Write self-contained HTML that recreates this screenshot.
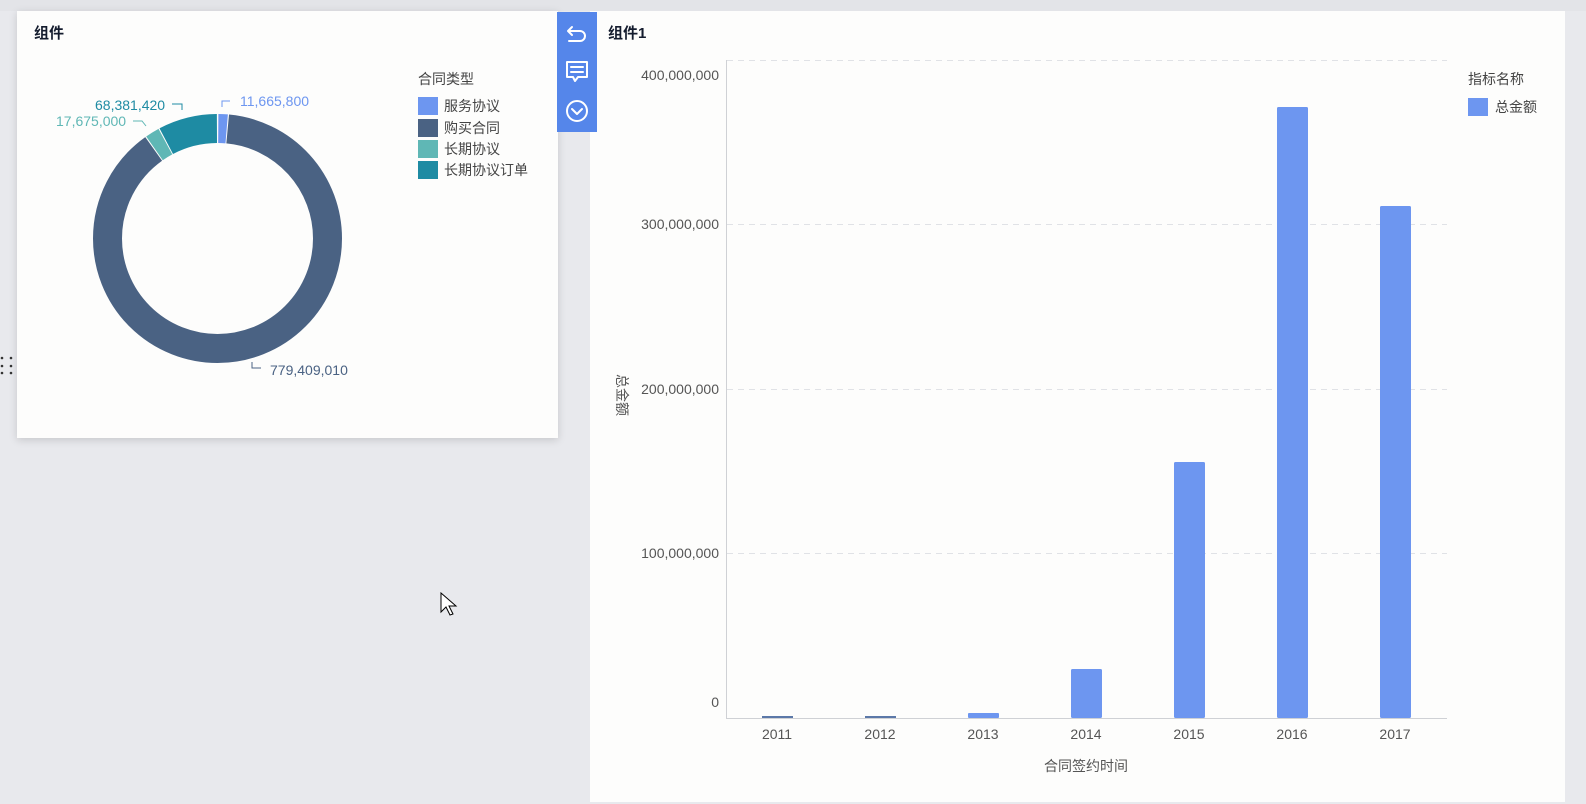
<!DOCTYPE html>
<html><head><meta charset="utf-8"><style>
body{margin:0;width:1586px;height:804px;background:#e8e9ed;position:relative;overflow:hidden;font-family:"Liberation Sans","Noto Sans CJK SC",sans-serif;color:#333}
.card{position:absolute;background:#fdfdfc}
.t{position:absolute;white-space:nowrap;font-size:14px;line-height:16px}
</style></head><body>
<div style="position:absolute;left:0;top:0;width:1586px;height:11px;background:#e3e4e8"></div>
<div class="card" style="left:17px;top:11px;width:541px;height:427px;box-shadow:0 2px 8px rgba(0,0,0,.15)"></div>
<div class="card" style="left:590px;top:11px;width:975px;height:791px"></div>
<div class="t" style="left:34px;top:26px;font-size:15px;font-weight:bold;color:#141c2e">组件</div>
<div class="t" style="left:608px;top:26px;font-size:15px;font-weight:bold;color:#141c2e">组件1</div>

<svg style="position:absolute;left:0;top:0" width="1586" height="804">
<g transform="rotate(-90 217.5 238.5)" fill="none" stroke-width="29">
<circle cx="217.5" cy="238.5" r="110" stroke="#6d96f0" stroke-dasharray="8.4 700" stroke-dashoffset="-0.8"/>
<circle cx="217.5" cy="238.5" r="110" stroke="#4a6283" stroke-dasharray="612.6 700" stroke-dashoffset="-10.2"/>
<circle cx="217.5" cy="238.5" r="110" stroke="#5fb7b5" stroke-dasharray="12.8 700" stroke-dashoffset="-623.8"/>
<circle cx="217.5" cy="238.5" r="110" stroke="#1e8ba3" stroke-dasharray="52.7 700" stroke-dashoffset="-637.6"/>
</g>
<g fill="none" stroke-width="1">
<path d="M222 107v-6h8" stroke="#6d96f0"/>
<path d="M172 104h10v6" stroke="#1e8ba3"/>
<path d="M133 121h9l4 5" stroke="#5fb7b5"/>
<path d="M252 362v6h9" stroke="#4a6283"/>
</g>
<!-- bar chart -->
<g stroke="#e0e2e6" stroke-dasharray="6 5">
<line x1="727" y1="60.5" x2="1447" y2="60.5"/>
<line x1="727" y1="224.5" x2="1447" y2="224.5"/>
<line x1="727" y1="389.5" x2="1447" y2="389.5"/>
<line x1="727" y1="553.5" x2="1447" y2="553.5"/>
</g>
<line x1="726.5" y1="60" x2="726.5" y2="718" stroke="#cfd1d5"/>
<line x1="726" y1="718.5" x2="1447" y2="718.5" stroke="#cfd1d5"/>
<g fill="#6d96f0">
<rect x="762" y="716" width="31" height="2" fill="#5b78a8"/>
<rect x="865" y="716" width="31" height="2" fill="#5b78a8"/>
<rect x="968" y="713" width="31" height="5" rx="1"/>
<rect x="1071" y="669" width="31" height="49" rx="1.5"/>
<rect x="1174" y="462" width="31" height="256" rx="1.5"/>
<rect x="1277" y="107" width="31" height="611" rx="1.5"/>
<rect x="1380" y="206" width="31" height="512" rx="1.5"/>
</g>
</svg>

<div class="t" style="left:418px;top:71px;color:#444">合同类型</div>
<div style="position:absolute;left:418px;top:97px;width:20px;height:18px;background:#6d96f0"></div>
<div style="position:absolute;left:418px;top:119px;width:20px;height:18px;background:#4a6283"></div>
<div style="position:absolute;left:418px;top:140px;width:20px;height:18px;background:#5fb7b5"></div>
<div style="position:absolute;left:418px;top:161px;width:20px;height:18px;background:#1e8ba3"></div>
<div class="t" style="left:444px;top:98px;color:#444">服务协议</div>
<div class="t" style="left:444px;top:120px;color:#444">购买合同</div>
<div class="t" style="left:444px;top:141px;color:#444">长期协议</div>
<div class="t" style="left:444px;top:162px;color:#444">长期协议订单</div>
<div class="t" style="left:240px;top:93px;color:#6d96f0">11,665,800</div>
<div class="t" style="left:95px;top:97px;color:#1e8ba3">68,381,420</div>
<div class="t" style="left:56px;top:113px;color:#5fb7b5">17,675,000</div>
<div class="t" style="left:270px;top:362px;color:#4a6283">779,409,010</div>

<!-- toolbar -->
<div style="position:absolute;left:557px;top:12px;width:40px;height:120px;background:#5586ea"></div>
<svg style="position:absolute;left:557px;top:12px" width="40" height="120" fill="none" stroke="#fff" stroke-width="2" stroke-linecap="round" stroke-linejoin="round">
<path d="M15 15l-4 4 4 4M11 19h12a5 5 0 0 1 0 10H12"/>
<path d="M10 50h20v15H21l-3 4-2-4h-6z"/><path d="M14 55h12M14 60h12"/>
<circle cx="20" cy="99" r="10"/><path d="M15 97l5 5 5-5"/>
</svg>

<!-- axis labels -->
<div class="t" style="left:619px;top:67px;width:100px;text-align:right;color:#555">400,000,000</div>
<div class="t" style="left:619px;top:216px;width:100px;text-align:right;color:#555">300,000,000</div>
<div class="t" style="left:619px;top:381px;width:100px;text-align:right;color:#555">200,000,000</div>
<div class="t" style="left:619px;top:545px;width:100px;text-align:right;color:#555">100,000,000</div>
<div class="t" style="left:619px;top:694px;width:100px;text-align:right;color:#555">0</div>
<div class="t" style="left:747px;top:726px;width:60px;text-align:center;color:#555">2011</div>
<div class="t" style="left:850px;top:726px;width:60px;text-align:center;color:#555">2012</div>
<div class="t" style="left:953px;top:726px;width:60px;text-align:center;color:#555">2013</div>
<div class="t" style="left:1056px;top:726px;width:60px;text-align:center;color:#555">2014</div>
<div class="t" style="left:1159px;top:726px;width:60px;text-align:center;color:#555">2015</div>
<div class="t" style="left:1262px;top:726px;width:60px;text-align:center;color:#555">2016</div>
<div class="t" style="left:1365px;top:726px;width:60px;text-align:center;color:#555">2017</div>
<div class="t" style="left:1036px;top:758px;width:100px;text-align:center;color:#555">合同签约时间</div>
<div class="t" style="left:600px;top:387px;width:44px;text-align:center;color:#555;transform:rotate(90deg)">总金额</div>
<div class="t" style="left:1468px;top:71px;color:#444">指标名称</div>
<div style="position:absolute;left:1468px;top:98px;width:20px;height:18px;background:#6d96f0"></div>
<div class="t" style="left:1495px;top:99px;color:#444">总金额</div>

<!-- grip dots -->
<svg style="position:absolute;left:0;top:355px" width="14" height="22" fill="#333">
<circle cx="2" cy="3" r="1.3"/><circle cx="11" cy="3" r="1.3"/><circle cx="2" cy="11" r="1.3"/><circle cx="11" cy="11" r="1.3"/><circle cx="2" cy="18" r="1.3"/><circle cx="11" cy="18" r="1.3"/>
</svg>
<!-- cursor -->
<svg style="position:absolute;left:440px;top:592px" width="20" height="28"><path d="M1 1v19l5-5 4 8 3-1-4-8h7z" fill="#fff" stroke="#000"/></svg>
</body></html>
